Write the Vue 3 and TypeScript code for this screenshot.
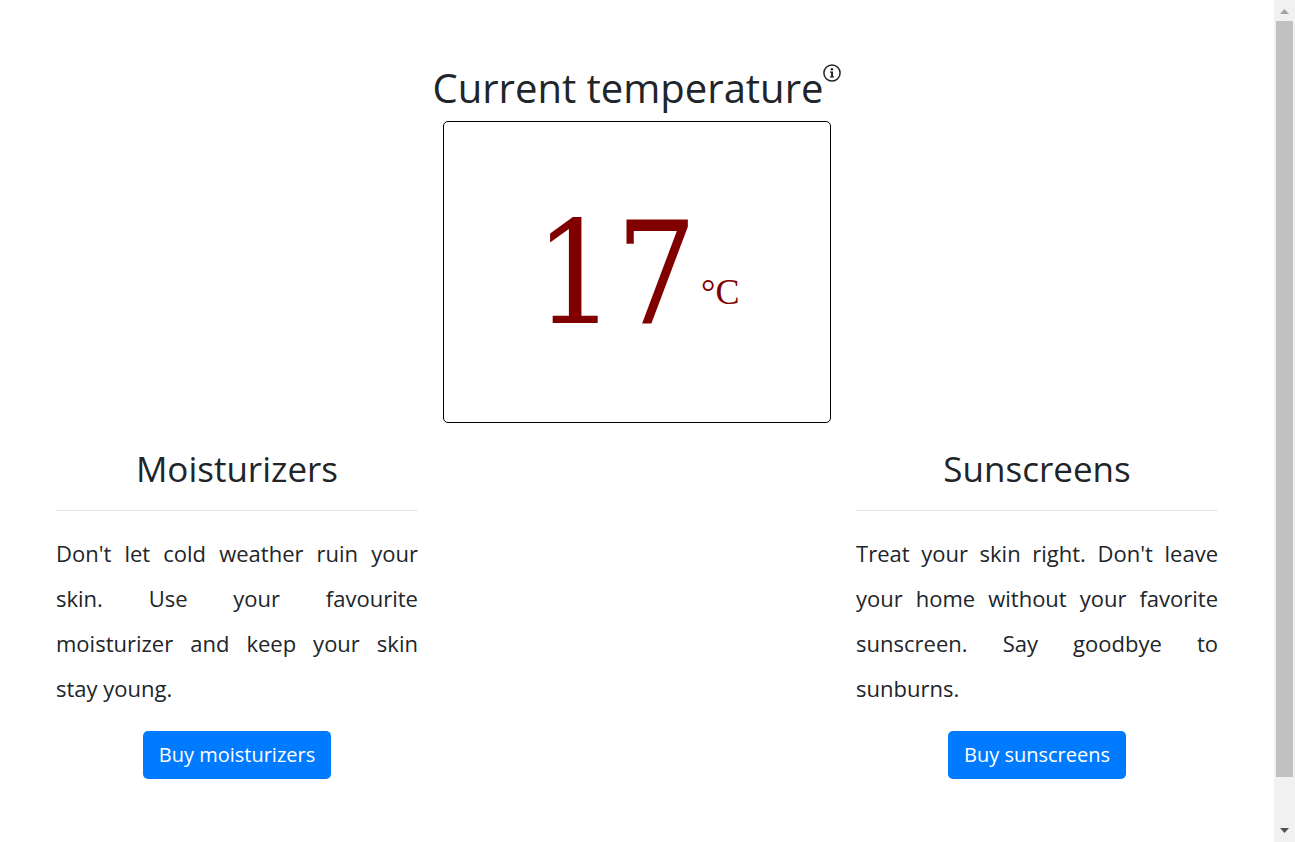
<script setup lang="ts">
interface Product {
  title: string
  text: string
  action: string
}

const temperature = 17

const moisturizers: Product = {
  title: 'Moisturizers',
  text: "Don't let cold weather ruin your skin. Use your favourite moisturizer and keep your skin stay young.",
  action: 'Buy moisturizers',
}

const sunscreens: Product = {
  title: 'Sunscreens',
  text: "Treat your skin right. Don't leave your home without your favorite sunscreen. Say goodbye to sunburns.",
  action: 'Buy sunscreens',
}

const products: Product[] = [moisturizers, sunscreens]
</script>

<template>
  <div class="page">
    <main class="content">
      <section class="weather">
        <h1 class="heading">
          <span>Current temperature</span>
          <svg class="info" viewBox="0 0 18 18" fill="currentColor" aria-hidden="true">
            <circle cx="9" cy="9" r="8.100" fill="none" stroke="currentColor" stroke-width="1.500" />
            <circle cx="8.900" cy="5.200" r="1.250" />
            <path d="M7 7.400h3v4.800h1v1.300H7v-1.300h1.100V8.700H7z" />
          </svg>
        </h1>
        <div class="reading">
          <span class="degrees">{{ temperature }}</span>
          <span class="unit">°C</span>
        </div>
      </section>

      <div class="products">
        <section v-for="product in products" :key="product.title" class="product">
          <h2>{{ product.title }}</h2>
          <hr />
          <p>{{ product.text }}</p>
          <button type="button">{{ product.action }}</button>
        </section>
      </div>
    </main>

    <div class="scrollbar" aria-hidden="true">
      <svg class="arrow up" viewBox="0 0 21 21"><path d="M6 14 10.500 9 15 14z" /></svg>
      <div class="track"><div class="thumb"></div></div>
      <svg class="arrow down" viewBox="0 0 21 21"><path d="M6 7h9l-4.500 5z" /></svg>
    </div>
  </div>
</template>

<style>
body {
  background: #fff;
}
</style>

<style scoped>
.page {
  display: flex;
  height: 100vh;
  overflow: hidden;
  color: #212529;
  font-family: "Open Sans", "Noto Sans", sans-serif;
}

.content {
  flex: 1;
  min-width: 0;
  padding: 64px 56px 0;
}

.weather {
  display: flex;
  flex-direction: column;
  align-items: center;
}

.heading {
  display: flex;
  align-items: flex-start;
  margin: 0 0 9px;
  font-size: 40px;
  font-weight: 400;
  line-height: 48px;
}

.info {
  width: 18px;
  height: 18px;
}

.reading {
  box-sizing: border-box;
  display: flex;
  align-items: center;
  justify-content: center;
  gap: 4px;
  width: 33.4%;
  height: 302px;
  border: 1px solid #000;
  border-radius: 5px;
  color: #800000;
}

.degrees {
  padding-top: 4px;
  font-family: "DejaVu Serif Condensed", "DejaVu Serif", serif;
  font-size: 142px;
  line-height: 160px;
}

.unit {
  padding-top: 40px;
  font-family: "Liberation Serif", serif;
  font-size: 36px;
  line-height: 40px;
}

.products {
  display: flex;
  justify-content: space-between;
  margin-top: 24px;
}

.product {
  width: 31.15%;
  text-align: center;
}

h2 {
  margin: 0;
  font-size: 35px;
  font-weight: 400;
  line-height: 44px;
}

hr {
  margin: 19px 0 20px;
  border: 0;
  border-top: 1px solid #e5e5e5;
}

p {
  margin: 0 0 20px;
  font-size: 22px;
  font-weight: 400;
  line-height: 45px;
  text-align: justify;
}

button {
  height: 48px;
  padding: 0 16px;
  border: 0;
  border-radius: 5px;
  background: #007bff;
  color: #fff;
  font: 400 20px/30px "Open Sans", "Noto Sans", sans-serif;
}

.scrollbar {
  display: flex;
  flex-direction: column;
  width: 21px;
  background: #f1f1f1;
}

.arrow {
  height: 21px;
}

.up {
  fill: #a3a3a3;
}

.down {
  fill: #505050;
}

.track {
  flex: 1;
  padding: 0 2px;
}

.thumb {
  height: 94.5%;
  background: #c1c1c1;
}
</style>
